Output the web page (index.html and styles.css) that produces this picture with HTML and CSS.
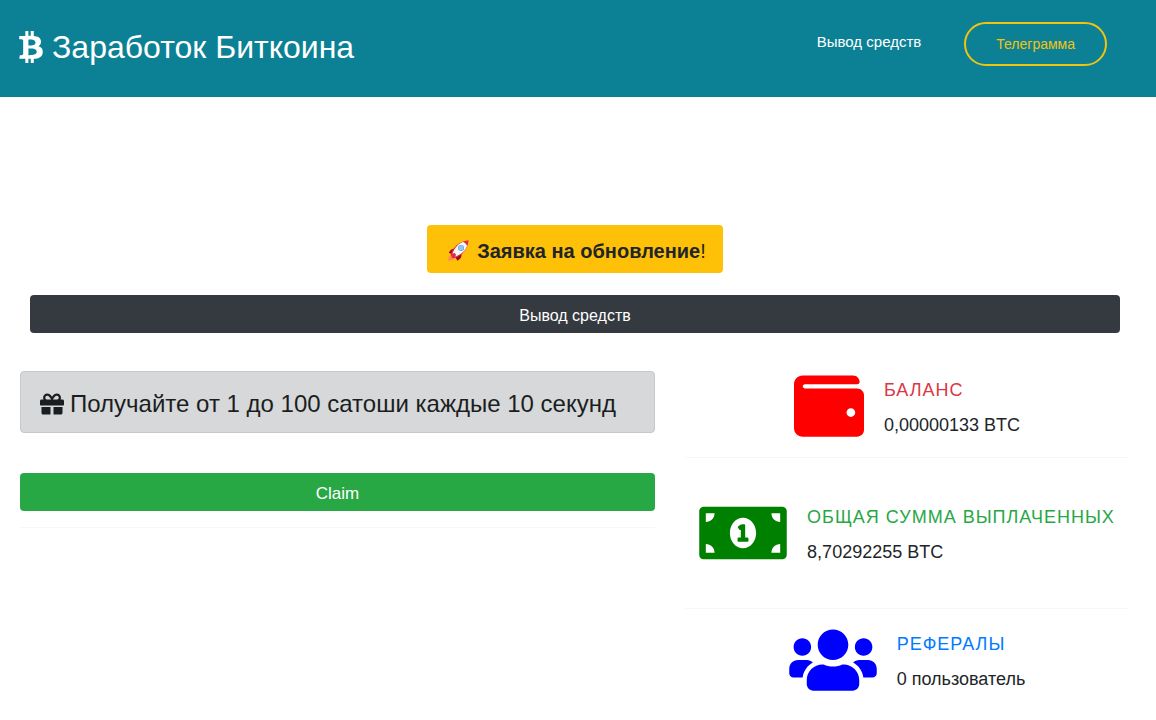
FILE: index.html
```html
<!DOCTYPE html>
<html lang="ru">
<head>
    <meta charset="UTF-8">
    <meta name="viewport" content="width=device-width, initial-scale=1">
    <title>Заработок Биткоина</title>
    <link rel="stylesheet" href="styles.css">
</head>
<body>
    <header class="header">
        <a class="logo" href="#">
            <svg class="logo-icon" viewBox="0 0 384 512" aria-hidden="true"><path d="M310.204 242.638c27.73-14.18 45.377-39.39 41.28-81.3-5.358-57.351-52.458-76.573-114.85-81.929V0h-48.528v77.203c-12.605 0-25.525.315-38.444.63V0h-48.53v79.409c-17.842.539-38.622.276-97.37 0v51.678c38.314-.678 58.417-3.14 63.023 21.427v217.429c-2.925 19.492-18.524 16.685-53.255 16.071L3.765 443.68c88.481 0 97.37.315 97.37.315V512h48.53v-67.06c13.234.315 26.154.315 38.444.315V512h48.528v-68.005c81.299-4.412 135.647-24.894 142.895-101.467 5.671-61.446-23.314-88.862-69.326-99.89zM150.608 134.553c27.415 0 113.126-8.507 113.126 48.528 0 54.515-85.71 48.212-113.126 48.212v-96.74zm0 251.776V279.821c32.772 0 133.127-9.138 133.127 53.255-.001 60.186-100.355 53.253-133.127 53.253z"/></svg>
            <span>Заработок Биткоина</span>
        </a>
        <nav class="nav">
            <a class="nav-link" href="#">Вывод средств</a>
            <a class="nav-btn" href="#">Телеграмма</a>
        </nav>
    </header>

    <main class="container">
        <div class="actions">
            <button class="btn btn-warning" type="button">
                <svg class="rocket" viewBox="0 0 36 36" aria-hidden="true">
                    <path fill="#ff8a50" d="M2 34c0-6 2-10 6-10l4 4c0 4-4 6-10 6z"/>
                    <path fill="#a0041e" d="M3 21c3-6 7-8 12-6L9 24zM17 34c6-3 8-8 6-12L13 27z"/>
                    <path fill="#dd2e44" d="M6 25C9 13 19 2 35 1c-1 16-12 26-24 29z"/>
                    <path fill="#f5f8fa" d="M9 22C13 12 19 6 27 3c4 1 6 3 6 6-3 9-9 14-19 18z"/>
                    <path fill="#dd2e44" d="M26 3c3-1 6-2 9-2 0 3-1 6-2 9-1-3-4-6-7-7zM7 24l5-3 3 3-3 5-4 1z"/>
                    <circle cx="23" cy="13" r="5" fill="#6f9fc4"/>
                    <circle cx="23" cy="13" r="4" fill="#8ccaf7"/>
                </svg>
                <span><strong>Заявка на обновление</strong>!</span>
            </button>
            <button class="btn btn-dark" type="button">Вывод средств</button>
        </div>

        <div class="row">
            <section class="claim">
                <div class="alert">
                    <svg class="gift" viewBox="0 0 512 512" aria-hidden="true"><path d="M32 448c0 17.700 14.300 32 32 32h160V320H32v128zm256 32h160c17.700 0 32-14.300 32-32V320H288v160zm192-320h-42.100c6.200-12.100 10.100-25.500 10.100-40 0-48.500-39.500-88-88-88-41.600 0-68.500 21.300-103 68.300-34.500-47-61.400-68.300-103-68.300-48.500 0-88 39.500-88 88 0 14.500 3.800 27.900 10.100 40H32c-17.700 0-32 14.300-32 32v80c0 8.800 7.200 16 16 16h480c8.800 0 16-7.200 16-16v-80c0-17.700-14.300-32-32-32zm-326.100 0c-22.100 0-40-17.900-40-40s17.900-40 40-40c19.900 0 34.600 3.300 86.100 80h-86.100zm206.100 0h-86.100c51.400-76.500 65.700-80 86.100-80 22.100 0 40 17.900 40 40s-17.900 40-40 40z"/></svg>
                    <span>Получайте от 1 до 100 сатоши каждые 10 секунд</span>
                </div>
                <button class="btn btn-success" type="button">Claim</button>
            </section>

            <section class="stats">
                <!-- Баланс -->
                <div class="stat">
                    <svg class="stat-icon wallet" viewBox="0 0 512 512" aria-hidden="true"><path d="M461.200 128H80c-8.840 0-16-7.160-16-16s7.160-16 16-16h384c8.840 0 16-7.160 16-16 0-26.510-21.490-48-48-48H64C28.650 32 0 60.650 0 96v320c0 35.350 28.650 64 64 64h397.200c28.020 0 50.800-21.530 50.800-48V176c0-26.470-22.780-48-50.800-48zM416 336c-17.670 0-32-14.330-32-32s14.330-32 32-32 32 14.330 32 32-14.330 32-32 32z"/></svg>
                    <div class="stat-text">
                        <h2 class="text-danger">Баланс</h2>
                        <p>0,00000133 BTC</p>
                    </div>
                </div>
                <!-- Выплаты -->
                <div class="stat stat-total">
                    <svg class="stat-icon money" viewBox="0 0 640 512" aria-hidden="true"><path d="M352 288h-16v-88c0-4.420-3.580-8-8-8h-13.580c-4.740 0-9.370 1.400-13.310 4.030l-15.330 10.220a7.994 7.994 0 0 0-2.220 11.090l8.880 13.310a7.994 7.994 0 0 0 11.090 2.220l.470-.310V288h-16c-4.420 0-8 3.580-8 8v16c0 4.420 3.580 8 8 8h64c4.420 0 8-3.580 8-8v-16c0-4.420-3.580-8-8-8zM608 64H32C14.330 64 0 78.330 0 96v320c0 17.670 14.330 32 32 32h576c17.670 0 32-14.330 32-32V96c0-17.670-14.330-32-32-32zM48 400v-64c35.350 0 64 28.650 64 64H48zm0-224v-64h64c0 35.350-28.650 64-64 64zm272 192c-53.020 0-96-50.150-96-112 0-61.860 42.980-112 96-112s96 50.140 96 112c0 61.870-43 112-96 112zm272 32h-64c0-35.350 28.650-64 64-64v64zm0-224c-35.350 0-64-28.650-64-64h64v64z"/></svg>
                    <div class="stat-text">
                        <h2 class="text-success">Общая сумма выплаченных</h2>
                        <p>8,70292255 BTC</p>
                    </div>
                </div>
                <!-- Рефералы -->
                <div class="stat">
                    <svg class="stat-icon users" viewBox="0 0 640 512" aria-hidden="true"><path d="M96 224c35.300 0 64-28.700 64-64s-28.700-64-64-64-64 28.700-64 64 28.700 64 64 64zm448 0c35.300 0 64-28.700 64-64s-28.700-64-64-64-64 28.700-64 64 28.700 64 64 64zm32 32h-64c-17.600 0-33.500 7.100-45.100 18.600 40.300 22.100 68.900 62 75.100 109.400h66c17.700 0 32-14.300 32-32v-32c0-35.300-28.700-64-64-64zm-256 0c61.900 0 112-50.100 112-112S381.900 32 320 32 208 82.100 208 144s50.100 112 112 112zm76.800 32h-8.300c-20.800 10-43.900 16-68.500 16s-47.600-6-68.500-16h-8.300C179.600 288 128 339.600 128 403.200V432c0 26.500 21.500 48 48 48h288c26.500 0 48-21.500 48-48v-28.800c0-63.600-51.600-115.200-115.200-115.200zm-223.700-13.400C161.500 263.100 145.600 256 128 256H64c-35.300 0-64 28.700-64 64v32c0 17.700 14.300 32 32 32h65.900c6.300-47.400 34.900-87.300 75.200-109.400z"/></svg>
                    <div class="stat-text">
                        <h2 class="text-primary">Рефералы</h2>
                        <p>0 пользователь</p>
                    </div>
                </div>
            </section>
        </div>
    </main>
</body>
</html>
```

FILE: styles.css
```css
* {
    box-sizing: border-box;
}

body {
    margin: 0;
    background: #fff;
    color: #212529;
    font-family: "Liberation Sans", Arial, sans-serif;
    font-size: 16px;
    line-height: 24px;
}

a {
    text-decoration: none;
}

svg {
    display: block;
    flex: none;
    fill: currentColor;
}

/* Шапка */
.header {
    display: flex;
    justify-content: space-between;
    align-items: flex-start;
    padding: 22px 49px 25px 19px;
    background: #0c8195;
}

.logo {
    display: flex;
    align-items: center;
    gap: 9px;
    color: #fff;
    font-size: 32px;
    line-height: 50px;
}

.logo-icon {
    width: 24px;
    height: 32px;
}

.nav {
    display: flex;
    align-items: flex-start;
    gap: 43px;
}

.nav-link {
    padding-top: 8px;
    color: #fff;
    font-size: 15px;
}

.nav-btn {
    padding: 8px 30px;
    border: 2px solid #f1c40f;
    border-radius: 22px;
    color: #f1c40f;
    font-size: 14px;
}

/* Контент */
.container {
    padding: 128px 27px 24px 20px;
}

.btn {
    border: 0;
    border-radius: 4px;
    padding: 9px 12px 5px;
    font-family: inherit;
    font-size: 16px;
    line-height: 24px;
    cursor: pointer;
}

.actions {
    display: flex;
    flex-direction: column;
    align-items: center;
    gap: 22px;
    padding: 0 9px 0 10px;
}

.btn-warning {
    display: flex;
    align-items: center;
    gap: 8px;
    padding: 11px 17px 7px 20px;
    background: #ffc107;
    color: #212529;
    font-size: 20px;
    line-height: 30px;
}

.rocket {
    width: 22px;
    height: 22px;
}

.btn-dark {
    width: 100%;
    background: #343a40;
    color: #fff;
}

.btn-success {
    width: 100%;
    background: #28a745;
    color: #fff;
    font-size: 17px;
}

.row {
    display: grid;
    grid-template-columns: 635fr 444fr;
    align-items: start;
    gap: 30px;
    margin-top: 38px;
}

.claim {
    padding-bottom: 16px;
    border-bottom: 1px solid #f7f7f7;
}

.alert {
    display: flex;
    align-items: center;
    gap: 6px;
    margin-bottom: 40px;
    padding: 14px 19px 10px;
    border: 1px solid #c6c8ca;
    border-radius: 4px;
    background: #d6d8d9;
    color: #1b1e21;
    font-size: 24px;
    line-height: 36px;
}

.gift {
    width: 24px;
    height: 24px;
}

/* Статистика */
.stat {
    display: flex;
    justify-content: center;
    align-items: center;
    gap: 20px;
    padding: 16px 0;
    border-bottom: 1px solid #f7f7f7;
}

.stat:first-child {
    padding-top: 0;
}

.stat:last-child {
    border-bottom: 0;
}

.stat-total {
    padding: 40px 0;
}

.stat-icon {
    height: 70px;
}

.wallet {
    width: 70px;
    color: #f00;
}

.money {
    width: 88px;
    color: #008000;
}

.users {
    width: 88px;
    color: #00f;
}

.stat-text {
    padding-top: 4px;
}

.stat-text h2,
.stat-text p {
    margin: 0;
    font-size: 18px;
    font-weight: 400;
    line-height: 27px;
}

.stat-text h2 {
    margin-bottom: 8px;
    letter-spacing: 1px;
    text-transform: uppercase;
}

.text-danger {
    color: #dc3545;
}

.text-success {
    color: #28a745;
}

.text-primary {
    color: #007bff;
}
```
